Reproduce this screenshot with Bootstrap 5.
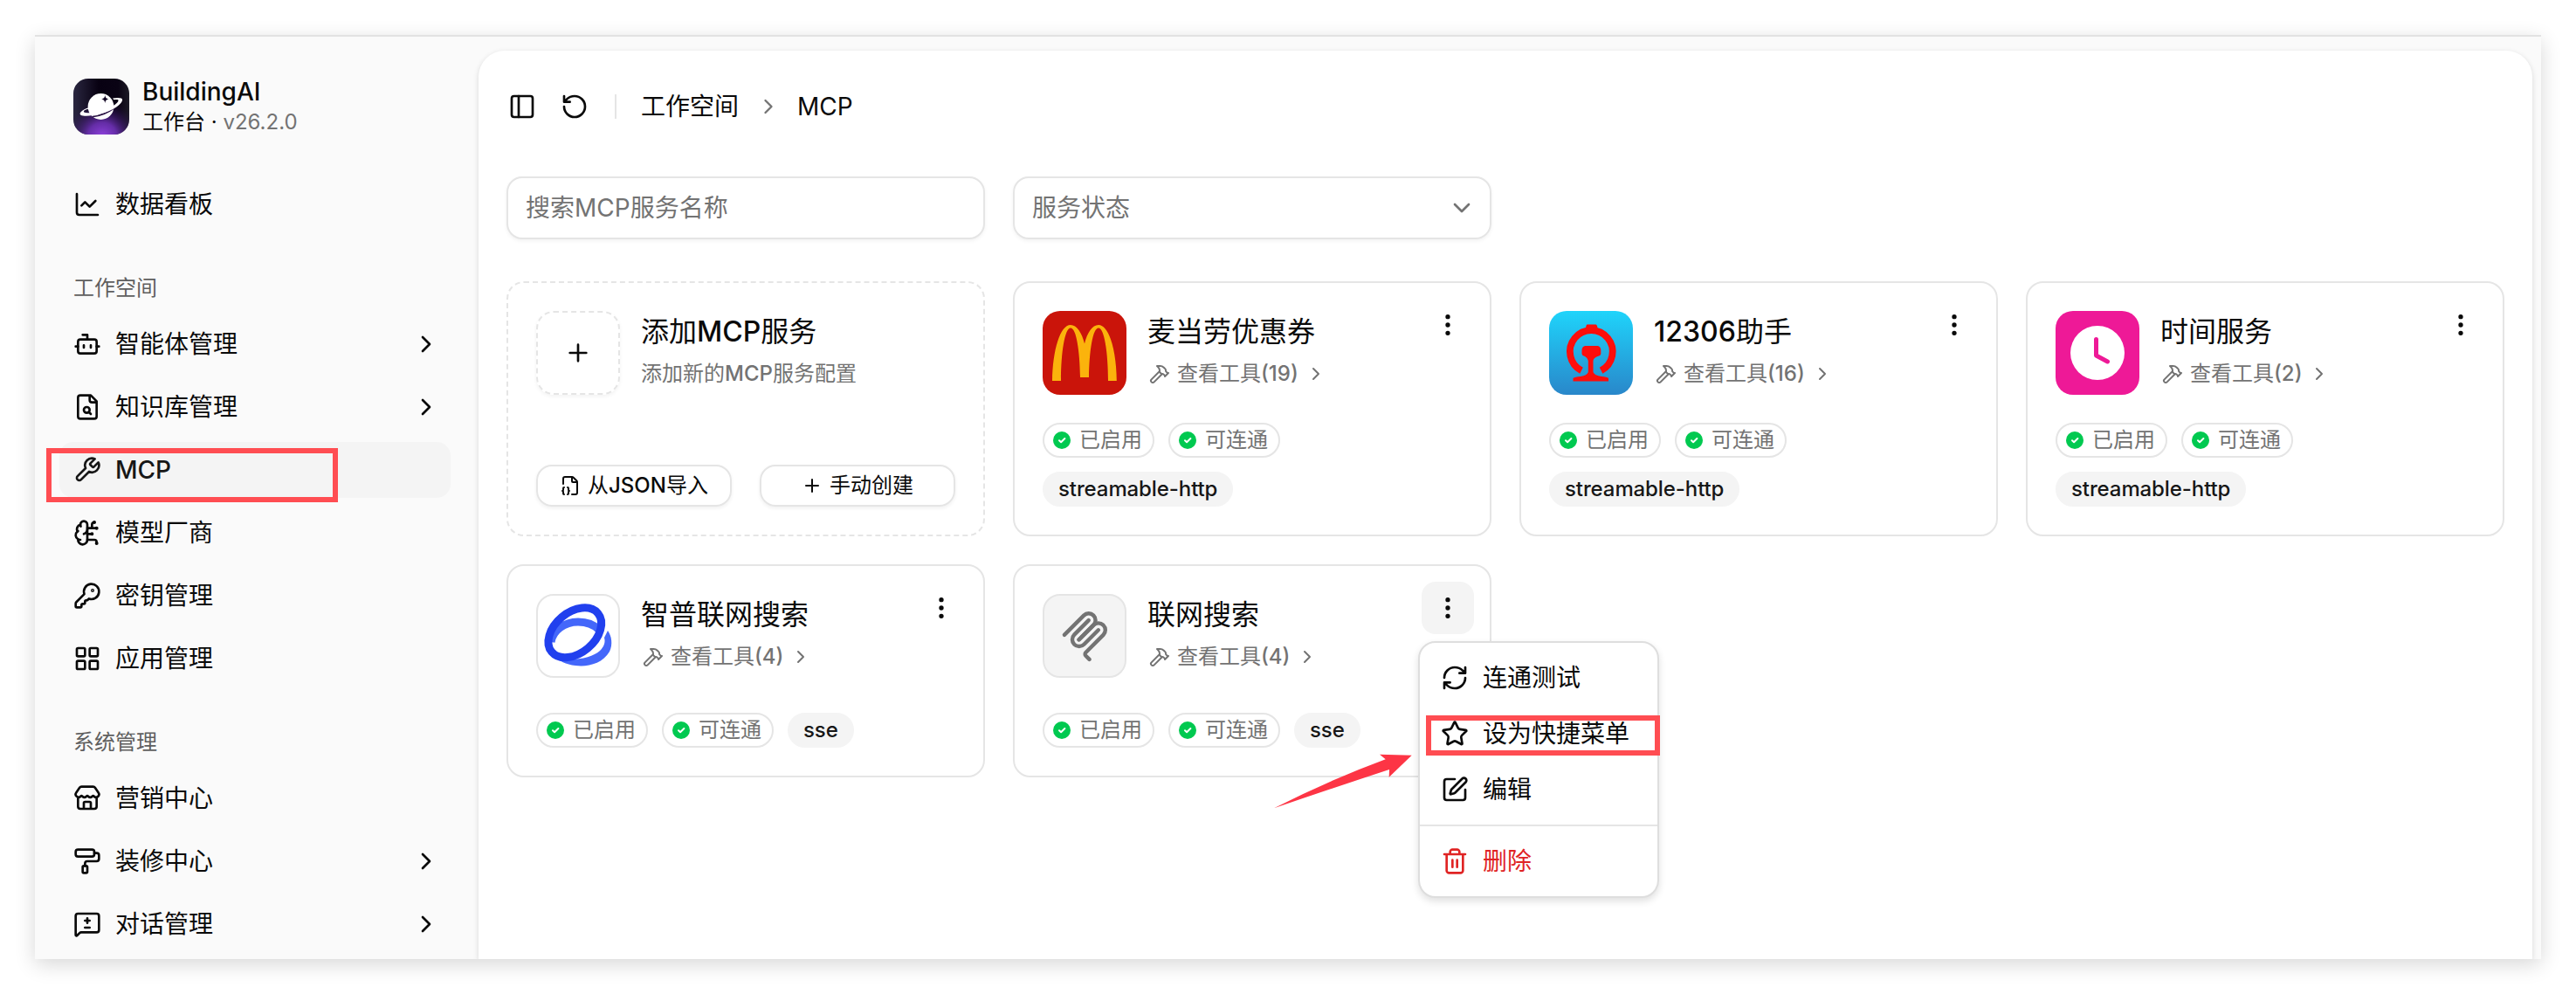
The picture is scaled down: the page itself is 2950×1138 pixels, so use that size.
<!DOCTYPE html>
<html lang="zh-CN">
<head>
    <meta charset="UTF-8">
    <meta name="viewport" content="width=device-width, initial-scale=1.0">
    <title>BuildingAI - MCP</title>
    <link href="https://cdn.jsdelivr.net/npm/bootstrap@5.3.0/dist/css/bootstrap.min.css" rel="stylesheet">
    <style>
        body { font-family: Inter, "Noto Sans CJK SC", sans-serif; font-size: 28px; line-height: 40px; color: #0a0a0a; background: #fff; padding: 40px; height: 1138px; overflow: hidden; }
        .ico { width: 32px; height: 32px; flex: none; fill: none; stroke: currentColor; stroke-width: 2; stroke-linecap: round; stroke-linejoin: round; }
        .ico-sm { width: 24px; height: 24px; }
        .muted { color: #737373; }
        .latin { font-weight: 500; }

        .app-window { height: 1058px; background: #fafafa; border-top: 2px solid #e2e2e2; box-shadow: 0 6px 22px rgba(0, 0, 0, .16); }
        .app-clip { height: 1056px; overflow: hidden; }

        /* sidebar */
        .sidebar { width: 508px; flex: none; padding: 48px 32px 0 28px; }
        .brand { padding-left: 16px; gap: 15px; height: 64px; margin-bottom: 48px; }
        .brand-logo { width: 64px; height: 64px; border-radius: 17px; }
        .brand-name { line-height: 34px; margin-top: 2px; font-weight: 500; }
        .brand-sub { font-size: 24px; line-height: 36px; }
        .side-link { height: 64px; border-radius: 16px; padding: 0 12px 0 16px; gap: 16px; color: #0a0a0a; position: relative; }
        .side-link.active { background: #f4f4f4; color: #171717; font-weight: 500; }
        .side-title { height: 64px; line-height: 64px; padding-left: 16px; font-size: 24px; color: #5f5f5f; margin-top: 32px; }
        .side-nav { gap: 8px; }

        /* main panel */
        .panel { background: #fff; margin: 16px 10px 0 0; border-radius: 30px 30px 0 0; box-shadow: 0 2px 6px rgba(0, 0, 0, .14); padding: 0 32px; }
        .topbar { height: 128px; padding-left: 2px; }
        .topbar .ico-reload { margin-left: 28px; }
        .topbar .split { width: 2px; height: 28px; background: #e5e5e5; margin: 0 28px 0 30px; }
        .topbar .ico-crumb { width: 28px; height: 28px; margin: 0 19px 0 20px; }
        .grid-4 { display: grid; grid-template-columns: repeat(4, 548px); gap: 32px; }
        .field { height: 72px; border: 2px solid #e5e5e5; border-radius: 18px; padding: 0 16px 0 20px; font-size: 28px; color: #737373; box-shadow: 0 2px 4px rgba(0, 0, 0, .05); }
        .field::placeholder { color: #737373; opacity: 1; }
        .filters { margin-top: 16px; margin-bottom: 48px; }

        /* service cards */
        .svc { border: 2px solid #e5e5e5; border-radius: 20px; padding: 32px; position: relative; background: #fff; }
        .row-a { height: 292px; }
        .row-b { height: 244px; }
        .avatar { width: 96px; height: 96px; flex: none; border-radius: 20px; }
        .avatar-box { border: 2px solid #e5e5e5; }
        .avatar-gray { background: #f4f4f4; }
        .avatar-add { box-shadow: 0 2px 4px rgba(0, 0, 0, .05); }
        .dashed { border-style: dashed; }
        .svc-name { font-size: 32px; line-height: 48px; }
        .svc-sub { font-size: 24px; line-height: 48px; gap: 8px; color: #737373; }
        .svc-tools { padding-left: 2px; }
        .dots { width: 60px; height: 60px; margin: -14px -14px 0 auto; border-radius: 16px; position: relative; flex: none; }
        .dots.open { background: #f4f4f4; }
        .pill { height: 40px; border: 2px solid #e5e5e5; border-radius: 20px; padding: 0 12px 0 8px; gap: 8px; font-size: 24px; color: #737373; }
        .pill-gray { background: #f4f4f4; border-color: #f4f4f4; color: #171717; font-weight: 500; padding: 0 16px; letter-spacing: -.1px; }
        .btn-line { width: 224px; height: 48px; border: 2px solid #e5e5e5; border-radius: 18px; padding: 0; gap: 8px; font-size: 24px; color: #0a0a0a; box-shadow: 0 2px 4px rgba(0, 0, 0, .06); }

        /* card menu */
        .svc-menu { position: absolute; top: 68px; left: -4px; width: 276px; padding: 8px; border: 2px solid #dedede; border-radius: 20px; font-size: 28px; z-index: 5; box-shadow: 0 4px 8px rgba(0, 0, 0, .12); --bs-dropdown-min-width: 0; }
        .svc-menu .dropdown-item { height: 64px; padding: 0 16px; gap: 16px; color: #0a0a0a; position: relative; }
        .svc-menu .dropdown-item.del { color: #e02424; }
        .svc-menu hr { margin: 8px -8px; border-top: 2px solid #e5e5e5; opacity: 1; }

        /* red markers */
        .marker { position: absolute; border: 6px solid #ff4d52; z-index: 6; }
        .marker-side { left: -15px; top: 7px; width: 334px; height: 62px; }
        .marker-menu { left: -1px; top: 11px; width: 268px; height: 46px; }
        .arrow { position: absolute; left: 296px; top: 214px; z-index: 4; }
    </style>
</head>
<body>
    <!-- icon set -->
    <svg class="d-none">
        <symbol id="i-chart" viewBox="0 0 24 24"><path d="M3 3v16a2 2 0 0 0 2 2h16M19 9l-5 5-4-4-3 3"/></symbol>
        <symbol id="i-bot" viewBox="0 0 24 24"><path d="M12 8V4H8M2 14h2M20 14h2M15 13v2M9 13v2"/><rect width="16" height="12" x="4" y="8" rx="2"/></symbol>
        <symbol id="i-filesearch" viewBox="0 0 24 24"><path d="M15 2H6a2 2 0 0 0-2 2v16a2 2 0 0 0 2 2h12a2 2 0 0 0 2-2V7zM14 2v4a2 2 0 0 0 2 2h4M13.3 16.3 15 18"/><circle cx="11.5" cy="14.5" r="2.5"/></symbol>
        <symbol id="i-wrench" viewBox="0 0 24 24"><path d="M14.7 6.3a1 1 0 0 0 0 1.4l1.6 1.6a1 1 0 0 0 1.4 0l3.77-3.77a6 6 0 0 1-7.94 7.94l-6.91 6.91a2.12 2.12 0 0 1-3-3l6.91-6.91a6 6 0 0 1 7.94-7.94l-3.76 3.76z"/></symbol>
        <symbol id="i-brain" viewBox="0 0 24 24"><path d="M12 5a3 3 0 1 0-5.997.125 4 4 0 0 0-2.526 5.77 4 4 0 0 0 .556 6.588A4 4 0 1 0 12 18Z"/><path d="M9 13a4.5 4.5 0 0 0 3-4M6.003 5.125A3 3 0 0 0 6.401 6.5M3.477 10.896a4 4 0 0 1 .585-.396M6 18a4 4 0 0 1-1.967-.516M12 13h4M12 18h6a2 2 0 0 1 2 2v1M12 8h8M16 8V5a2 2 0 0 1 2-2"/><circle cx="16" cy="13" r=".5"/><circle cx="18" cy="3" r=".5"/><circle cx="20" cy="21" r=".5"/><circle cx="20" cy="8" r=".5"/></symbol>
        <symbol id="i-key" viewBox="0 0 24 24"><path d="M2.586 17.414A2 2 0 0 0 2 18.828V21a1 1 0 0 0 1 1h3a1 1 0 0 0 1-1v-1a1 1 0 0 1 1-1h1a1 1 0 0 0 1-1v-1a1 1 0 0 1 1-1h.172a2 2 0 0 0 1.414-.586l.814-.814a6.5 6.5 0 1 0-4-4z"/><circle cx="16.5" cy="7.5" r=".5"/></symbol>
        <symbol id="i-grid" viewBox="0 0 24 24"><rect width="7" height="7" x="3" y="3" rx="1"/><rect width="7" height="7" x="14" y="3" rx="1"/><rect width="7" height="7" x="14" y="14" rx="1"/><rect width="7" height="7" x="3" y="14" rx="1"/></symbol>
        <symbol id="i-store" viewBox="0 0 24 24"><path d="M15 21v-5a1 1 0 0 0-1-1h-4a1 1 0 0 0-1 1v5M17.774 10.31a1.12 1.12 0 0 0-1.549 0 2.5 2.5 0 0 1-3.451 0 1.12 1.12 0 0 0-1.548 0 2.5 2.5 0 0 1-3.452 0 1.12 1.12 0 0 0-1.549 0 2.5 2.5 0 0 1-3.77-3.248l2.889-4.184A2 2 0 0 1 7 2h10a2 2 0 0 1 1.653.873l2.895 4.192a2.5 2.5 0 0 1-3.774 3.244M4 10.95V19a2 2 0 0 0 2 2h12a2 2 0 0 0 2-2v-8.05"/></symbol>
        <symbol id="i-roller" viewBox="0 0 24 24"><rect width="16" height="6" x="2" y="2" rx="2"/><path d="M10 16v-2a2 2 0 0 1 2-2h8a2 2 0 0 0 2-2V7a2 2 0 0 0-2-2h-2"/><rect width="4" height="6" x="8" y="16" rx="1"/></symbol>
        <symbol id="i-message" viewBox="0 0 24 24"><path d="M22 17a2 2 0 0 1-2 2H6.828a2 2 0 0 0-1.414.586l-2.202 2.202A.71.71 0 0 1 2 21.286V5a2 2 0 0 1 2-2h16a2 2 0 0 1 2 2zM10 15h4M10 9h4M12 7v4"/></symbol>
        <symbol id="i-right" viewBox="0 0 24 24"><path d="m9 18 6-6-6-6"/></symbol>
        <symbol id="i-down" viewBox="0 0 24 24"><path d="m6 9 6 6 6-6"/></symbol>
        <symbol id="i-panel" viewBox="0 0 24 24"><rect width="18" height="18" x="3" y="3" rx="2"/><path d="M9 3v18"/></symbol>
        <symbol id="i-reload" viewBox="0 0 24 24"><path d="M3 12a9 9 0 1 0 9-9 9.75 9.75 0 0 0-6.74 2.74L3 8M3 3v5h5"/></symbol>
        <symbol id="i-plus" viewBox="0 0 24 24"><path d="M5 12h14M12 5v14"/></symbol>
        <symbol id="i-json" viewBox="0 0 24 24"><path d="M14 22h4a2 2 0 0 0 2-2V8a2.4 2.4 0 0 0-.706-1.706l-3.588-3.588A2.4 2.4 0 0 0 14 2H6a2 2 0 0 0-2 2v6M14 2v5a1 1 0 0 0 1 1h5M5 14a1 1 0 0 0-1 1v2a1 1 0 0 1-1 1 1 1 0 0 1 1 1v2a1 1 0 0 0 1 1M9 22a1 1 0 0 0 1-1v-2a1 1 0 0 1 1-1 1 1 0 0 1-1-1v-2a1 1 0 0 0-1-1"/></symbol>
        <symbol id="i-hammer" viewBox="0 0 24 24"><path d="m15 12-9.373 9.373a1 1 0 0 1-3.001-3L12 9M18 15l4-4M21.5 11.5l-1.914-1.914A2 2 0 0 1 19 8.172v-.344a2 2 0 0 0-.586-1.414l-1.657-1.657A6 6 0 0 0 12.516 3H9l1.243 1.243A6 6 0 0 1 12 8.485V10l2 2h1.172a2 2 0 0 1 1.414.586L18.5 14.5"/></symbol>
        <symbol id="i-dots" viewBox="0 0 24 24"><circle cx="12" cy="5" r="1"/><circle cx="12" cy="12" r="1"/><circle cx="12" cy="19" r="1"/></symbol>
        <symbol id="i-ok" viewBox="0 0 24 24"><circle cx="12" cy="12" r="10" fill="#00c950" stroke="none"/><path d="m9 12.2 2.1 2 4.3-4.2" stroke="#fff"/></symbol>
        <symbol id="i-refresh" viewBox="0 0 24 24"><path d="M3 12a9 9 0 0 1 9-9 9.75 9.75 0 0 1 6.74 2.74L21 8M21 3v5h-5M21 12a9 9 0 0 1-9 9 9.75 9.75 0 0 1-6.74-2.74L3 16M8 16H3v5"/></symbol>
        <symbol id="i-star" viewBox="0 0 24 24"><path d="M11.525 2.295a.53.53 0 0 1 .95 0l2.31 4.679a2.123 2.123 0 0 0 1.595 1.16l5.166.756a.53.53 0 0 1 .294.904l-3.736 3.638a2.123 2.123 0 0 0-.611 1.878l.882 5.14a.53.53 0 0 1-.771.56l-4.618-2.428a2.122 2.122 0 0 0-1.973 0L6.396 21.01a.53.53 0 0 1-.77-.56l.881-5.139a2.122 2.122 0 0 0-.611-1.879L2.16 9.795a.53.53 0 0 1 .294-.906l5.165-.755a2.122 2.122 0 0 0 1.597-1.16z"/></symbol>
        <symbol id="i-edit" viewBox="0 0 24 24"><path d="M12 3H5a2 2 0 0 0-2 2v14a2 2 0 0 0 2 2h14a2 2 0 0 0 2-2v-7M18.375 2.625a1 1 0 0 1 3 3l-9.013 9.014a2 2 0 0 1-.853.505l-2.873.84a.5.5 0 0 1-.62-.62l.84-2.873a2 2 0 0 1 .506-.852z"/></symbol>
        <symbol id="i-trash" viewBox="0 0 24 24"><path d="M3 6h18M19 6v14c0 1-1 2-2 2H7c-1 0-2-1-2-2V6M8 6V4c0-1 1-2 2-2h4c1 0 2 1 2 2v2M10 11v6M14 11v6"/></symbol>
    </svg>

    <div class="app-window">
        <div class="app-clip d-flex">
            <aside class="sidebar">
                <div class="brand d-flex align-items-center">
                    <svg class="brand-logo" viewBox="0 0 64 64">
                        <defs>
                            <radialGradient id="glow" cx=".52" cy="1.05" r=".66"><stop offset="0" stop-color="#9344e2"/><stop offset=".4" stop-color="#7434c0" stop-opacity=".85"/><stop offset="1" stop-color="#2a1450" stop-opacity="0"/></radialGradient>
                            <linearGradient id="night"><stop offset="0" stop-color="#2a2740"/><stop offset=".45" stop-color="#080112"/><stop offset=".8" stop-color="#0a0314"/><stop offset="1" stop-color="#1c1a26"/></linearGradient>
                        </defs>
                        <rect width="64" height="64" fill="url(#night)"/>
                        <rect width="64" height="64" fill="url(#glow)"/>
                        <circle cx="31.5" cy="32" r="14.9" fill="#fff"/>
                        <path d="M22 43.6C31 42.6 39 39.5 47 33.5" stroke="#2c1545" stroke-width="1.6" fill="none"/>
                        <path d="M17.5 33.2C9 36 6 40 8.5 41.7C14 44.5 37 41 49 32.8C56 28 57.5 24 55 22.6C52.5 21.6 49 21.8 45 22.6L46.5 24.3C49.5 23.7 52 24 51.5 25.5C50 29.5 43 32.5 35 35.5C27 38.2 16 40.2 12.8 38.8C10.5 37.5 13 35.5 17.2 34.8Z" fill="#fff"/>
                        <path d="M36.3 18.8C36.8 22 37.5 22.8 40.5 23.5C37.5 24.2 36.8 25 36.3 28.2C35.8 25 35.1 24.2 32.1 23.5C35.1 22.8 35.8 22 36.3 18.8Z" fill="#140826"/>
                    </svg>
                    <div>
                        <div class="brand-name">BuildingAI</div>
                        <div class="brand-sub">工作台 · <span class="muted">v26.2.0</span></div>
                    </div>
                </div>

                <nav class="side-nav d-flex flex-column">
                    <a class="side-link d-flex align-items-center text-decoration-none"><svg class="ico"><use href="#i-chart"/></svg>数据看板</a>
                </nav>

                <div class="side-title">工作空间</div>
                <nav class="side-nav d-flex flex-column">
                    <a class="side-link d-flex align-items-center text-decoration-none"><svg class="ico"><use href="#i-bot"/></svg>智能体管理<svg class="ico ms-auto"><use href="#i-right"/></svg></a>
                    <a class="side-link d-flex align-items-center text-decoration-none"><svg class="ico"><use href="#i-filesearch"/></svg>知识库管理<svg class="ico ms-auto"><use href="#i-right"/></svg></a>
                    <a class="side-link active d-flex align-items-center text-decoration-none"><svg class="ico"><use href="#i-wrench"/></svg>MCP<span class="marker marker-side"></span></a>
                    <a class="side-link d-flex align-items-center text-decoration-none"><svg class="ico"><use href="#i-brain"/></svg>模型厂商</a>
                    <a class="side-link d-flex align-items-center text-decoration-none"><svg class="ico"><use href="#i-key"/></svg>密钥管理</a>
                    <a class="side-link d-flex align-items-center text-decoration-none"><svg class="ico"><use href="#i-grid"/></svg>应用管理</a>
                </nav>

                <div class="side-title">系统管理</div>
                <nav class="side-nav d-flex flex-column">
                    <a class="side-link d-flex align-items-center text-decoration-none"><svg class="ico"><use href="#i-store"/></svg>营销中心</a>
                    <a class="side-link d-flex align-items-center text-decoration-none"><svg class="ico"><use href="#i-roller"/></svg>装修中心<svg class="ico ms-auto"><use href="#i-right"/></svg></a>
                    <a class="side-link d-flex align-items-center text-decoration-none"><svg class="ico"><use href="#i-message"/></svg>对话管理<svg class="ico ms-auto"><use href="#i-right"/></svg></a>
                </nav>
            </aside>

            <main class="panel flex-grow-1">
                <div class="topbar d-flex align-items-center">
                    <svg class="ico"><use href="#i-panel"/></svg>
                    <svg class="ico ico-reload"><use href="#i-reload"/></svg>
                    <span class="split"></span>
                    <span>工作空间</span>
                    <svg class="ico ico-crumb muted"><use href="#i-right"/></svg>
                    <span>MCP</span>
                </div>

                <div class="filters grid-4">
                    <input type="text" class="form-control field" placeholder="搜索MCP服务名称">
                    <div class="field d-flex align-items-center justify-content-between">服务状态<svg class="ico"><use href="#i-down"/></svg></div>
                </div>

                <div class="grid-4">
                    <!-- add service -->
                    <div class="svc row-a dashed d-flex flex-column">
                        <div class="d-flex gap-4">
                            <div class="avatar avatar-box avatar-add dashed d-flex align-items-center justify-content-center"><svg class="ico"><use href="#i-plus"/></svg></div>
                            <div>
                                <div class="svc-name">添加<span class="latin">MCP</span>服务</div>
                                <div class="svc-sub">添加新的<span class="latin">MCP</span>服务配置</div>
                            </div>
                        </div>
                        <div class="d-flex justify-content-between mt-auto">
                            <button class="btn btn-line d-flex align-items-center justify-content-center"><svg class="ico ico-sm"><use href="#i-json"/></svg><span>从<span class="latin">JSON</span>导入</span></button>
                            <button class="btn btn-line d-flex align-items-center justify-content-center"><svg class="ico ico-sm"><use href="#i-plus"/></svg>手动创建</button>
                        </div>
                    </div>

                    <div class="svc row-a d-flex flex-column">
                        <div class="d-flex gap-4">
                            <svg class="avatar" viewBox="0 0 96 96">
                                <rect width="96" height="96" fill="#ca140a"/>
                                <path d="M11 80C11.5 45 20 16 32 16C39 16 45 25 48 37.5C51 25 57 16 64 16C76 16 84.5 45 84.8 80H75C75 47 70.5 19.5 64 19.5C57.5 19.5 53.5 45 53 76H43C42.5 45 38.5 19.5 32 19.5C25.5 19.5 21 47 21 80Z" fill="#fbb30c"/>
                            </svg>
                            <div>
                                <div class="svc-name">麦当劳优惠券</div>
                                <div class="svc-sub svc-tools d-flex align-items-center"><svg class="ico ico-sm"><use href="#i-hammer"/></svg><span>查看工具<span class="latin">(19)</span></span><svg class="ico ico-sm"><use href="#i-right"/></svg></div>
                            </div>
                            <div class="dots d-flex align-items-center justify-content-center"><svg class="ico"><use href="#i-dots"/></svg></div>
                        </div>
                        <div class="d-flex flex-wrap gap-3 mt-auto">
                            <span class="pill d-flex align-items-center"><svg class="ico ico-sm"><use href="#i-ok"/></svg>已启用</span>
                            <span class="pill d-flex align-items-center"><svg class="ico ico-sm"><use href="#i-ok"/></svg>可连通</span>
                            <span class="pill pill-gray d-flex align-items-center">streamable-http</span>
                        </div>
                    </div>

                    <div class="svc row-a d-flex flex-column">
                        <div class="d-flex gap-4">
                            <svg class="avatar" viewBox="0 0 96 96">
                                <defs><linearGradient id="sky" x2="0" y2="1"><stop offset="0" stop-color="#1fd4fb"/><stop offset="1" stop-color="#2987ca"/></linearGradient></defs>
                                <rect width="96" height="96" fill="url(#sky)"/>
                                <path d="M37 68.2A24.4 24.4 0 1 1 59.6 68.2" fill="none" stroke="#fe0d0b" stroke-width="7.8"/>
                                <path d="M43.500 15.500H53.500Q55.500 16 55.500 21H42Q42 16 43.500 15.500Z" fill="#fe0d0b"/>
                                <path d="M41 40H56Q59.300 41 59.300 45V49Q59 51.300 55.500 52Q50.800 54 50.500 57V70Q52 74 60 75Q66 75.500 68 77V80.600H27.500V77Q30 75.500 36 75Q43.500 74 44.800 70V57Q44.500 54 41 52Q37.800 51.300 37.500 49V45Q37.500 41 41 40Z" fill="#fe0d0b"/>
                            </svg>
                            <div>
                                <div class="svc-name"><span class="latin">12306</span>助手</div>
                                <div class="svc-sub svc-tools d-flex align-items-center"><svg class="ico ico-sm"><use href="#i-hammer"/></svg><span>查看工具<span class="latin">(16)</span></span><svg class="ico ico-sm"><use href="#i-right"/></svg></div>
                            </div>
                            <div class="dots d-flex align-items-center justify-content-center"><svg class="ico"><use href="#i-dots"/></svg></div>
                        </div>
                        <div class="d-flex flex-wrap gap-3 mt-auto">
                            <span class="pill d-flex align-items-center"><svg class="ico ico-sm"><use href="#i-ok"/></svg>已启用</span>
                            <span class="pill d-flex align-items-center"><svg class="ico ico-sm"><use href="#i-ok"/></svg>可连通</span>
                            <span class="pill pill-gray d-flex align-items-center">streamable-http</span>
                        </div>
                    </div>

                    <div class="svc row-a d-flex flex-column">
                        <div class="d-flex gap-4">
                            <svg class="avatar" viewBox="0 0 96 96">
                                <rect width="96" height="96" fill="#ee1997"/>
                                <circle cx="48" cy="48" r="31" fill="#fff"/>
                                <path d="M46.5 32.5V51L59.500 58" fill="none" stroke="#ee1997" stroke-width="5" stroke-linecap="round" stroke-linejoin="round"/>
                            </svg>
                            <div>
                                <div class="svc-name">时间服务</div>
                                <div class="svc-sub svc-tools d-flex align-items-center"><svg class="ico ico-sm"><use href="#i-hammer"/></svg><span>查看工具<span class="latin">(2)</span></span><svg class="ico ico-sm"><use href="#i-right"/></svg></div>
                            </div>
                            <div class="dots d-flex align-items-center justify-content-center"><svg class="ico"><use href="#i-dots"/></svg></div>
                        </div>
                        <div class="d-flex flex-wrap gap-3 mt-auto">
                            <span class="pill d-flex align-items-center"><svg class="ico ico-sm"><use href="#i-ok"/></svg>已启用</span>
                            <span class="pill d-flex align-items-center"><svg class="ico ico-sm"><use href="#i-ok"/></svg>可连通</span>
                            <span class="pill pill-gray d-flex align-items-center">streamable-http</span>
                        </div>
                    </div>

                    <div class="svc row-b d-flex flex-column">
                        <div class="d-flex gap-4">
                            <svg class="avatar avatar-box" viewBox="2 2 92 92">
                                <path d="M17 55C19 42 32 32 48 32C58 32 66 35 72 41" fill="none" stroke="#4467fa" stroke-width="9"/>
                                <path d="M82 42C86.5 48 88 58 84 66C76 80 58 84 45 82C34 81 26 76 21 72L36 75C55 75 66 71 73 65C78 60 79.500 55 78 50Z" fill="#4467fa"/>
                                <ellipse cx="44.3" cy="44.3" rx="34.5" ry="23.2" transform="rotate(-40 44.3 44.3)" fill="none" stroke="#2140ee" stroke-width="9"/>
                            </svg>
                            <div>
                                <div class="svc-name">智普联网搜索</div>
                                <div class="svc-sub svc-tools d-flex align-items-center"><svg class="ico ico-sm"><use href="#i-hammer"/></svg><span>查看工具<span class="latin">(4)</span></span><svg class="ico ico-sm"><use href="#i-right"/></svg></div>
                            </div>
                            <div class="dots d-flex align-items-center justify-content-center"><svg class="ico"><use href="#i-dots"/></svg></div>
                        </div>
                        <div class="d-flex flex-wrap gap-3 mt-auto">
                            <span class="pill d-flex align-items-center"><svg class="ico ico-sm"><use href="#i-ok"/></svg>已启用</span>
                            <span class="pill d-flex align-items-center"><svg class="ico ico-sm"><use href="#i-ok"/></svg>可连通</span>
                            <span class="pill pill-gray d-flex align-items-center">sse</span>
                        </div>
                    </div>

                    <div class="svc row-b d-flex flex-column">
                        <div class="d-flex gap-4">
                            <div class="avatar avatar-box avatar-gray d-flex align-items-center justify-content-center">
                                <svg width="59" height="59" viewBox="0 0 180 180" fill="none" stroke="#737373" stroke-width="13.5" stroke-linecap="round">
                                    <path d="M18 84.853 85.882 16.971c9.373-9.373 24.569-9.373 33.941 0 9.373 9.372 9.373 24.568 0 33.941L68.558 102.177"/>
                                    <path d="m69.265 101.470 50.558-50.558c9.373-9.373 24.569-9.373 33.942 0l.353.353c9.373 9.373 9.373 24.569 0 33.941L92.725 146.600c-3.124 3.124-3.124 8.189 0 11.313l12.606 12.607"/>
                                    <path d="M102.853 33.941 52.648 84.146c-9.372 9.372-9.372 24.568 0 33.941 9.373 9.372 24.569 9.372 33.941 0l50.205-50.205"/>
                                </svg>
                            </div>
                            <div>
                                <div class="svc-name">联网搜索</div>
                                <div class="svc-sub svc-tools d-flex align-items-center"><svg class="ico ico-sm"><use href="#i-hammer"/></svg><span>查看工具<span class="latin">(4)</span></span><svg class="ico ico-sm"><use href="#i-right"/></svg></div>
                            </div>
                            <div class="dots open d-flex align-items-center justify-content-center">
                                <svg class="ico"><use href="#i-dots"/></svg>
                                <div class="dropdown-menu show svc-menu">
                                    <a class="dropdown-item d-flex align-items-center"><svg class="ico"><use href="#i-refresh"/></svg>连通测试</a>
                                    <a class="dropdown-item d-flex align-items-center"><svg class="ico"><use href="#i-star"/></svg>设为快捷菜单<span class="marker marker-menu"></span></a>
                                    <a class="dropdown-item d-flex align-items-center"><svg class="ico"><use href="#i-edit"/></svg>编辑</a>
                                    <hr>
                                    <a class="dropdown-item del d-flex align-items-center"><svg class="ico"><use href="#i-trash"/></svg>删除</a>
                                </div>
                            </div>
                        </div>
                        <div class="d-flex flex-wrap gap-3 mt-auto">
                            <span class="pill d-flex align-items-center"><svg class="ico ico-sm"><use href="#i-ok"/></svg>已启用</span>
                            <span class="pill d-flex align-items-center"><svg class="ico ico-sm"><use href="#i-ok"/></svg>可连通</span>
                            <span class="pill pill-gray d-flex align-items-center">sse</span>
                        </div>
                        <svg class="arrow" width="160" height="64"><path d="M1 63.3Q62 32 128.700 7.300L122 1.700L158.700 2.700L132.700 27.700L133 19Q66 41 1 63.300Z" fill="#fd3545"/></svg>
                    </div>
                </div>
            </main>
        </div>
    </div>
    <script src="https://cdn.jsdelivr.net/npm/bootstrap@5.3.0/dist/js/bootstrap.bundle.min.js"></script>
</body>
</html>
